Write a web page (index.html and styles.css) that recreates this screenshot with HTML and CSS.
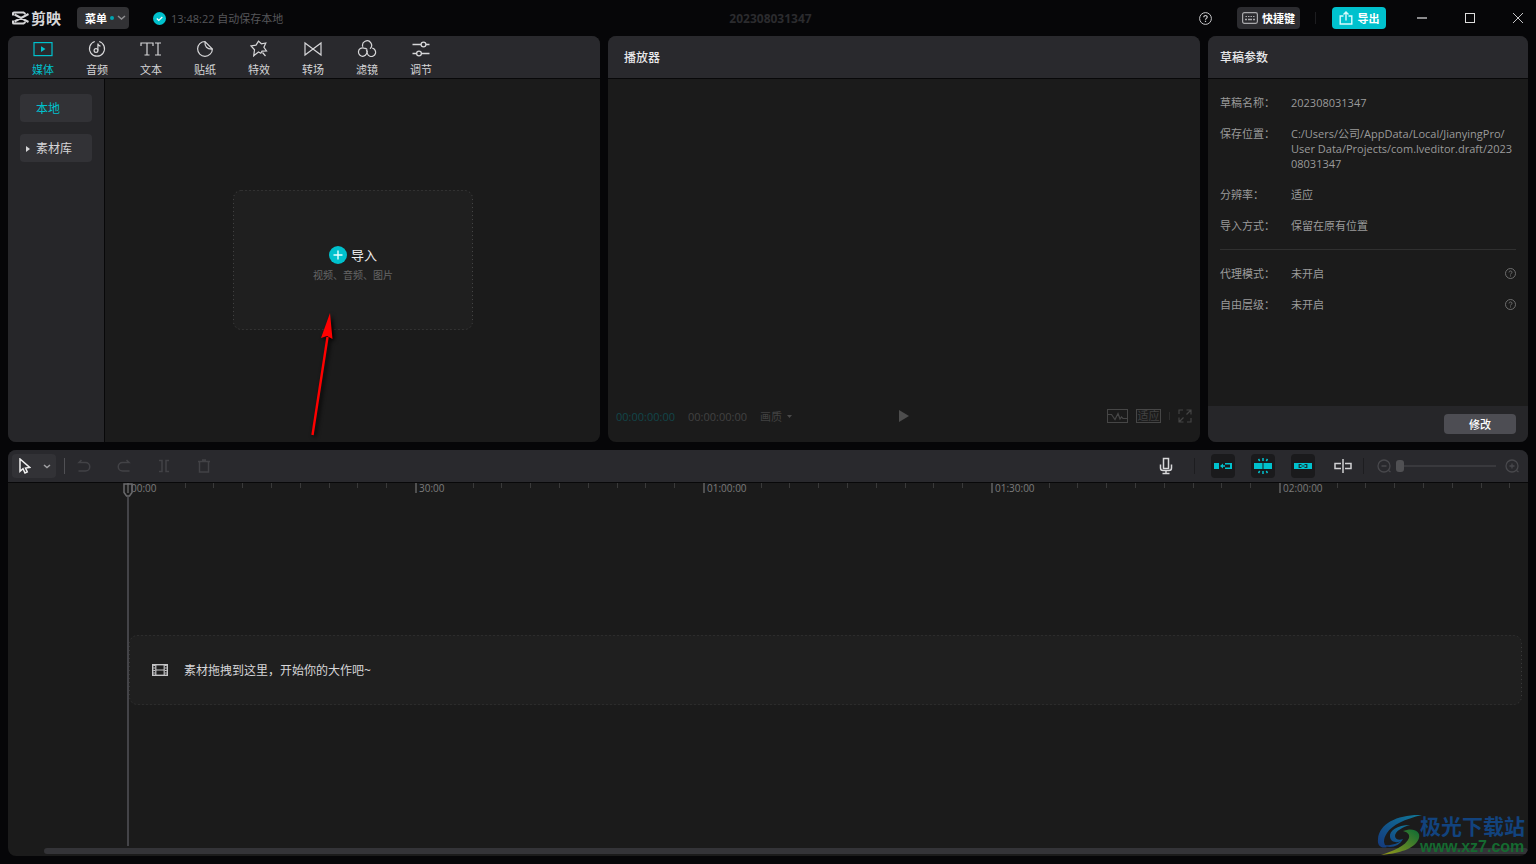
FILE: index.html
```html
<!DOCTYPE html>
<html lang="zh-CN">
<head>
<meta charset="utf-8">
<title>剪映</title>
<link rel="stylesheet" href="styles.css">
</head>
<body>
<div class="app">
  <header class="titlebar">
    <div class="titlebar-left">
      <div class="brand">
        <svg width="17" height="14" viewBox="0 0 17 14" fill="none" stroke="#d6d6d8" stroke-width="2"><path d="M16.500 3L2.500 10.500M16.500 11L2.500 3.500M1 4.500V2Q1 1.500 2 1.500H11.500L13.500 3M1 9.500V12Q1 12.500 2 12.500H11.500L13.500 11"/></svg>
        <span class="brand-name">剪映</span>
      </div>
      <button class="chip menu-button">菜单<i class="dot"></i><svg width="9" height="6" viewBox="0 0 9 6" fill="none" stroke="#8f8f92" stroke-width="1.500"><path d="M1 1l3.500 3L8 1"/></svg></button>
      <div class="autosave">
        <svg width="13" height="13" viewBox="0 0 13 13"><circle cx="6.500" cy="6.500" r="6.500" fill="#00c1cd"/><path d="M3.800 6.500l2 2 3.500-3.500" fill="none" stroke="#fff" stroke-width="1.200"/></svg>
        <span>13:48:22 自动保存本地</span>
      </div>
    </div>
    <h1 class="project-title">202308031347</h1>
    <div class="titlebar-right">
      <button class="icon-button help" aria-label="帮助"><svg width="13" height="13" viewBox="0 0 13 13" fill="none" stroke="#c8c8ca"><circle cx="6.500" cy="6.500" r="5.900"/><path d="M4.800 5.200c0-2.300 3.500-2.200 3.400 0 0 1.100-1.700 1.300-1.700 2.500M6.500 8.800v1.200" stroke-width="1.200"/></svg></button>
      <button class="chip shortcut-button"><svg width="16" height="12" viewBox="0 0 16 12" fill="none" stroke="#a9a9ac"><rect x=".6" y=".6" width="14.800" height="10.800" rx="1.800" stroke-width="1.200"/><path d="M3.500 4.500h9" stroke-dasharray="1.500 1"/><path d="M3 7.500h2M6 7.500h4M11 7.500h2" stroke-width="1.300"/></svg>快捷键</button>
      <i class="bar-separator"></i>
      <button class="chip export-button"><svg width="14" height="14" viewBox="0 0 14 14" fill="none" stroke="#d8fafc" stroke-width="1.400"><path d="M4.500 5H1.200v8h11.600V5H9.500M7 9.500V1.500M4.500 3.500L7 1l2.500 2.500"/></svg>导出</button>
      <div class="window-buttons">
        <button class="window-button" aria-label="最小化"><svg width="12" height="12"><path d="M1 6h10" stroke="#8a8a8c" stroke-width="2"/></svg></button>
        <button class="window-button" aria-label="最大化"><svg width="12" height="12"><rect x="1.500" y="1.500" width="9" height="9" fill="none" stroke="#dcdcdc"/></svg></button>
        <button class="window-button" aria-label="关闭"><svg width="12" height="12"><path d="M1 1l10 10M11 1L1 11" stroke="#c4c4c6"/></svg></button>
      </div>
    </div>
  </header>

  <main class="workspace">
    <section class="panel media-panel">
      <nav class="panel-head tabs">
        <button class="tab active"><svg width="20" height="18" viewBox="0 0 20 18"><rect x="1" y="2.600" width="18" height="13" fill="none" stroke="currentColor" stroke-width="1.200"/><path d="M8 6.200l4.500 2.900L8 12z" fill="currentColor"/></svg>媒体</button>
        <button class="tab"><svg width="20" height="18" viewBox="0 0 20 18" fill="none" stroke="currentColor" stroke-width="1.200"><path d="M7.800 1.500a7.500 7.500 0 1 0 4.400 0"/><circle cx="9" cy="10.500" r="1.900"/><path d="M10.900 10.500V3.500c0 1.600.8 2.300 2.600 2.600"/></svg>音频</button>
        <button class="tab"><svg width="22" height="18" viewBox="0 0 22 18" fill="none" stroke="currentColor" stroke-width="1.200"><path d="M1 6V3h12v3M7 3v12M4.500 15h5M15 3h6M18 3v12M15 15h6"/></svg>文本</button>
        <button class="tab"><svg width="20" height="18" viewBox="0 0 20 18" fill="none" stroke="currentColor" stroke-width="1.200"><path d="M10 1.500A7.400 7.400 0 1 0 17.400 9zM10 1.500c-.5 5 2 7.900 7.400 7.500"/></svg>贴纸</button>
        <button class="tab"><svg width="20" height="18" viewBox="0 0 20 18" fill="none" stroke="currentColor" stroke-width="1.200"><path d="M11.800 13.200L9.500 12l-4.800 3.800.8-6L2 6l5-.9 2.500-4 2.900 2.700 4.400-.8-1.900 4.300 2.600 3.600-4.500.2zM13.500 12.500l3 3.500"/></svg>特效</button>
        <button class="tab"><svg width="20" height="18" viewBox="0 0 20 18" fill="none" stroke="currentColor" stroke-width="1.200"><path d="M2 3v12l8-6 8 6V3l-8 6z"/></svg>转场</button>
        <button class="tab"><svg width="20" height="18" viewBox="0 0 20 18" fill="none" stroke="currentColor" stroke-width="1.200"><path d="M5.800 6.800a4.500 4.500 0 1 1 7.200 2M9.300 10a4.200 4.200 0 1 1-2.300-1.900c1.500.1 2.600.5 3.300 1.500M10.600 10.500a4.200 4.200 0 1 0 4.700-2.300"/></svg>滤镜</button>
        <button class="tab"><svg width="20" height="18" viewBox="0 0 20 18" fill="none" stroke="currentColor" stroke-width="1.300"><path d="M1.500 4.500h8.500M15 4.500h3.500M1.500 13.500h4M10.500 13.500h8"/><circle cx="12.500" cy="4.500" r="2.400"/><circle cx="8" cy="13.500" r="2.400"/></svg>调节</button>
      </nav>
      <div class="media-body">
        <aside class="media-sidebar">
          <button class="side-item active">本地</button>
          <button class="side-item"><svg class="side-caret" width="4" height="6"><path d="M0 0l4 3-4 3z" fill="#d6d6d8"/></svg>素材库</button>
        </aside>
        <div class="media-content">
          <button class="import-box">
            <svg class="dotted-frame" width="100%" height="100%"><rect x=".5" y=".5" rx="8"/></svg>
            <span class="import-title"><svg width="18" height="18"><circle cx="9" cy="9" r="9" fill="#00c1cd"/><path d="M4.500 9h9M9 4.500v9" stroke="#e8ffff" stroke-width="1.400"/></svg>导入</span>
            <span class="import-hint">视频、音频、图片</span>
          </button>
          <svg class="arrow" width="40" height="136" viewBox="0 0 40 136"><path d="M9.500 130L24.500 32" stroke="#f00" stroke-width="2.400"/><path d="M27 8L18 33l6-2 5.500 3z" fill="#f00"/></svg>
        </div>
      </div>
    </section>

    <section class="panel player-panel">
      <h2 class="panel-head panel-title player-title">播放器</h2>
      <div class="player-stage"></div>
      <div class="player-controls">
        <div class="player-times">
          <span class="time-current">00:00:00:00</span>
          <span>00:00:00:00</span>
          <button class="quality">画质<svg width="5" height="3"><path d="M0 0h5L2.500 3z" fill="#4a4a4a"/></svg></button>
        </div>
        <button class="icon-button" aria-label="播放"><svg width="12" height="14"><path d="M1 1l10 6-10 6z" fill="#4d4d4d"/></svg></button>
        <div class="player-tools">
          <button class="icon-button" aria-label="示波器"><svg width="21" height="14" fill="none" stroke="#464646"><rect x=".5" y=".5" width="20" height="13"/><path d="M1 5.500h3.500l3.500 5 3-6 2 5.500 1.500-2 1.500 1.500h5" stroke-width="1.200"/></svg></button>
          <button class="fit">适应</button>
          <i class="tool-separator"></i>
          <button class="icon-button" aria-label="全屏"><svg width="14" height="14" fill="none" stroke="#444" stroke-width="1.200"><path d="M1 5V1h4M9 13h4V9M8.500 1H13v4.500M13 1L8.500 5.500M1 8.500V13h4.500M1 13l4.500-4.500"/></svg></button>
        </div>
      </div>
    </section>

    <section class="panel params-panel">
      <h2 class="panel-head panel-title">草稿参数</h2>
      <dl class="params">
        <div class="param"><dt>草稿名称：</dt><dd>202308031347</dd></div>
        <div class="param"><dt>保存位置：</dt><dd>C:/Users/公司/AppData/Local/JianyingPro/<wbr>User Data/Projects/com.lveditor.draft/2023<wbr>08031347</dd></div>
        <div class="param"><dt>分辨率：</dt><dd>适应</dd></div>
        <div class="param"><dt>导入方式：</dt><dd>保留在原有位置</dd></div>
        <div class="param divided"><dt>代理模式：</dt><dd>未开启</dd><svg class="hint" width="11" height="11" viewBox="0 0 13 13" fill="none" stroke="#7d7d7d"><circle cx="6.500" cy="6.500" r="5.900"/><path d="M4.800 5.200c0-2.300 3.500-2.200 3.400 0 0 1.100-1.700 1.300-1.700 2.500M6.500 8.800v1.200"/></svg></div>
        <div class="param"><dt>自由层级：</dt><dd>未开启</dd><svg class="hint" width="11" height="11" viewBox="0 0 13 13" fill="none" stroke="#7d7d7d"><circle cx="6.500" cy="6.500" r="5.900"/><path d="M4.800 5.200c0-2.300 3.500-2.200 3.400 0 0 1.100-1.700 1.300-1.700 2.500M6.500 8.800v1.200"/></svg></div>
      </dl>
      <footer class="params-foot"><button class="modify">修改</button></footer>
    </section>
  </main>

  <section class="panel timeline">
    <div class="toolbar">
      <button class="pointer-tool" aria-label="选择"><svg width="12" height="16" viewBox="0 0 12 16" fill="none" stroke="#f0f0f0" stroke-width="1.500"><path d="M1 1v12.300l3-2.600 2 4.300 2.300-1.100L6.500 10l4.200-.6z"/></svg><svg width="8" height="5" fill="none" stroke="#a0a0a3" stroke-width="1.500"><path d="M1 1l3 2.500L7 1"/></svg></button>
      <i class="bar-separator light"></i>
      <div class="edit-tools">
        <button class="tool" aria-label="撤销"><svg width="14" height="14" fill="none" stroke="#424246" stroke-width="1.500"><path d="M4.500 1L2 3.500h6.500a4 4 0 0 1 0 8.500H1.500"/></svg></button>
        <button class="tool" aria-label="重做"><svg width="14" height="14" fill="none" stroke="#424246" stroke-width="1.500"><path d="M9.500 1L12 3.500H5.500a4 4 0 0 0 0 8.500h7"/></svg></button>
        <button class="tool" aria-label="分割"><svg width="14" height="14" fill="none" stroke="#424246" stroke-width="1.500"><path d="M2 1.500h3v11H2M12 1.500H9v11h3"/></svg></button>
        <button class="tool" aria-label="删除"><svg width="14" height="14" fill="none" stroke="#424246" stroke-width="1.500"><path d="M1 2.500h12M2.500 2.500v10.500h9V2.500M5 1h4"/></svg></button>
      </div>
      <div class="track-tools">
        <button class="tool" aria-label="录音"><svg width="14" height="18" fill="none" stroke="#d8d8da" stroke-width="1.500"><rect x="4.500" y="1.500" width="5" height="10"/><path d="M1.500 7.500v3.500q0 2.500 2.500 2.500h6q2.500 0 2.500-2.500V7.500M7 13.500V17M3.500 16.500h7"/></svg></button>
        <i class="bar-separator"></i>
        <button class="tool on" aria-label="主轨磁吸"><svg width="18" height="8" fill="#00c1cd"><path d="M0 1h5v6H0zM9 1.500v1.700h2v1.600H9v1.700L6 4zM11 1h7v6h-7V5.500h5v-3h-5z"/></svg></button>
        <button class="tool on" aria-label="自动吸附"><svg width="18" height="18" fill="#00c1cd"><path d="M0 6h8.500v6H0zM9.500 6H18v6H9.500z"/><path d="M9 1v3M4.500 2l1.200 2M13.500 2l-1.200 2M9 14v3M4.500 16l1.200-2M13.500 16l-1.200-2" stroke="#00c1cd" stroke-width="1.500"/></svg></button>
        <button class="tool on" aria-label="联动"><svg width="18" height="8"><path d="M0 1h18v6H0z" fill="#00c1cd"/><path d="M7.500 2.500H5.200v3h2.300M10.500 2.500h2.300v3h-2.300M7.500 4h3" fill="none" stroke="#1b2b2d" stroke-width="1.200"/></svg></button>
        <button class="tool" aria-label="预览轴"><svg width="18" height="14" fill="none" stroke="#d0d0d2" stroke-width="1.500"><path d="M7 4.500H1v5h6M11 4.500h6v5h-6M9 0v14"/></svg></button>
        <i class="bar-separator"></i>
        <div class="zoom-group">
          <button class="tool" aria-label="缩小"><svg width="15" height="14" fill="none" stroke="#48484c" stroke-width="1.300"><circle cx="7" cy="7" r="6"/><path d="M4.500 7h5M11.500 11.500l2 1.500"/></svg></button>
          <input class="zoom-slider" type="range" min="0" max="100" value="0" aria-label="时间线缩放">
          <button class="tool" aria-label="放大"><svg width="15" height="14" fill="none" stroke="#48484c" stroke-width="1.300"><circle cx="7" cy="7" r="6"/><path d="M4.500 7h5M7 4.500v5M11.500 11.500l2 1.500"/></svg></button>
        </div>
      </div>
    </div>
    <div class="timeline-body">
      <div class="ruler">
        <div class="segment"><span>00:00</span><i></i><i></i><i></i><i></i><i></i><i></i><i></i><i></i><i></i><i></i></div>
        <div class="segment"><span>30:00</span><i></i><i></i><i></i><i></i><i></i><i></i><i></i><i></i><i></i><i></i></div>
        <div class="segment"><span>01:00:00</span><i></i><i></i><i></i><i></i><i></i><i></i><i></i><i></i><i></i><i></i></div>
        <div class="segment"><span>01:30:00</span><i></i><i></i><i></i><i></i><i></i><i></i><i></i><i></i><i></i><i></i></div>
        <div class="segment"><span>02:00:00</span><i></i><i></i><i></i><i></i><i></i><i></i><i></i><i></i><i></i><i></i></div>
      </div>
      <div class="track-area">
        <div class="drop-track">
          <svg class="dotted-frame" width="100%" height="100%"><rect x=".5" y=".5" rx="8"/></svg>
          <svg width="16" height="12" fill="none" stroke="#c4c4c6"><rect x=".7" y=".7" width="14.600" height="10.600" stroke-width="1.400"/><path d="M3.800 1v10M12.200 1v10M4 6h8" stroke-width="1.200"/><path d="M2.200 1v10M13.800 1v10" stroke-dasharray="1 1.500" stroke-width="2"/></svg>
          <span>素材拖拽到这里，开始你的大作吧~</span>
        </div>
      </div>
      <div class="scroll-row"><div class="scroll-thumb"></div></div>
      <div class="playhead"><svg width="10" height="14" fill="none" stroke="#6a6a6c" stroke-width="1.500"><path d="M1 1h8v8.500l-2.500 3.500h-3L1 9.500z"/></svg></div>
    </div>
  </section>

  <div class="watermark">
    <svg width="46" height="42" viewBox="0 0 46 42">
      <defs>
        <linearGradient id="wm-blue" x1="1" y1="0" x2="0" y2="1"><stop offset="0" stop-color="#107a9a"/><stop offset="1" stop-color="#14387c"/></linearGradient>
        <linearGradient id="wm-green" x1="1" y1="0" x2="0" y2="1"><stop offset="0" stop-color="#0d6b35"/><stop offset="1" stop-color="#9a9a1a"/></linearGradient>
      </defs>
      <path d="M45 1C22 0 2 9 1 25c-1 7 4 10 9 8-4-3-4-8 0-14C15 11 28 5 45 1z" fill="url(#wm-blue)"/>
      <path d="M33 11c-13 0-21 6-20 12 1 6 9 7 13 2-4 2-8 0-8-3 0-5 8-9 15-11zM6 31c6 4 16 2 20-6-4 5-13 7-20 6z" fill="url(#wm-blue)"/>
      <path d="M26 17c10-4 18 0 16 7-3 9-15 15-38 17 12-4 25-9 28-17 1-4-2-6-6-7z" fill="url(#wm-green)"/>
    </svg>
    <div class="watermark-text"><span class="wm-name">极光下载站</span><span class="wm-url">www.xz7.com</span></div>
  </div>
</div>
</body>
</html>
```
FILE: styles.css
```css
* { box-sizing: border-box; }

body {
  margin: 0;
  background: #060608;
  color: #d6d6d8;
  font-family: "Open Sans", "Noto Sans CJK SC", sans-serif;
  font-size: 11px;
  line-height: 15px;
}

button {
  margin: 0;
  padding: 0;
  border: 0;
  background: none;
  color: inherit;
  font: inherit;
}

svg { display: block; flex: none; }
h1, h2, dl, dd { margin: 0; }

.app {
  position: relative;
  display: grid;
  grid-template-rows: 36px minmax(0, 406fr) minmax(0, 414fr);
  min-height: 100vh;
  padding-bottom: 8px;
}

/* Title bar */
.titlebar {
  display: grid;
  grid-template-columns: 1fr auto 1fr;
  align-items: center;
}
.titlebar-left, .titlebar-right, .brand, .autosave, .chip, .window-buttons {
  display: flex;
  align-items: center;
}
.titlebar-left { padding-left: 12px; }
.brand { gap: 2px; width: 65px; }
.brand-name { font-size: 15px; font-weight: 700; }
.chip {
  justify-content: center;
  height: 22px;
  border-radius: 4px;
  background: #2c2c30;
  color: #fff;
  font-weight: 700;
}
.menu-button { width: 52px; gap: 3px; padding-left: 5px; background: #323235; }
.dot { width: 4px; height: 4px; border-radius: 50%; background: #00a5b0; }
.autosave { gap: 5px; margin-left: 24px; color: #56565a; }
.project-title { padding-left: 5px; font-size: 12px; font-weight: 700; color: #2b2b2e; }
.titlebar-right { justify-content: flex-end; }
.icon-button { display: flex; align-items: center; justify-content: center; }
.help { margin-right: 25px; }
.shortcut-button { width: 63px; gap: 4px; }
.export-button { width: 54px; gap: 5px; background: #00c1cd; }
.bar-separator { width: 1px; height: 16px; background: #1d1d20; }
.titlebar-right .bar-separator { height: 12px; margin: 0 16px 0 15px; }
.window-buttons { gap: 12px; margin-left: 18px; }
.window-button {
  display: flex;
  align-items: center;
  justify-content: center;
  width: 36px;
  height: 36px;
}

/* Panels */
.workspace {
  display: grid;
  grid-template-columns: minmax(0, 1fr) minmax(0, 1fr) 320px;
  gap: 8px;
  padding: 0 8px;
}
.panel {
  display: flex;
  flex-direction: column;
  overflow: hidden;
  border-radius: 8px;
  background: #1b1b1b;
}
.panel-head {
  flex: none;
  height: 43px;
  border-bottom: 1px solid #080809;
  background: #29292d;
}
.panel-title {
  padding: 0 12px;
  color: #e8e8ea;
  font-size: 12px;
  font-weight: 500;
  line-height: 44px;
}
.player-title { padding: 0 16px; }

/* Media */
.tabs { display: flex; padding: 0 8px; }
.tab {
  display: flex;
  flex-direction: column;
  align-items: center;
  gap: 4px;
  width: 54px;
  padding-top: 4px;
}
.active { color: #00c1cd; }
.media-body { display: flex; flex: 1; }
.media-sidebar {
  display: flex;
  flex-direction: column;
  gap: 12px;
  width: 97px;
  padding: 15px 12px;
  border-right: 1px solid #080809;
  background: #262629;
}
.side-item {
  position: relative;
  height: 28px;
  padding-left: 16px;
  border-radius: 4px;
  background: #323236;
  font-size: 12px;
  text-align: left;
}
.side-caret { position: absolute; left: 6px; top: 12px; }
.media-content {
  position: relative;
  display: flex;
  flex: 1;
  align-items: center;
  justify-content: center;
  padding: 0 0 1px 1px;
}
.import-box {
  position: relative;
  display: flex;
  flex-direction: column;
  align-items: center;
  justify-content: center;
  width: 240px;
  height: 140px;
  padding-top: 10px;
  border-radius: 8px;
  background: #1f1f1f;
}
.dotted-frame {
  position: absolute;
  inset: 0;
  fill: none;
  stroke: #444;
  stroke-dasharray: 1 3;
}
.dotted-frame rect { width: calc(100% - 1px); height: calc(100% - 1px); }
.import-title {
  display: flex;
  align-items: center;
  gap: 4px;
  font-size: 13px;
  line-height: 20px;
  color: #ededed;
}
.import-hint { font-size: 10px; line-height: 20px; color: #666; }
.arrow {
  position: absolute;
  left: 198px;
  bottom: 1px;
  filter: drop-shadow(2px 2px 2px #000);
}

/* Player */
.player-stage { flex: 1; }
.player-controls {
  display: grid;
  grid-template-columns: 1fr auto 1fr;
  align-items: center;
  height: 52px;
  padding: 0 8px;
  color: #424242;
}
.player-times { display: flex; gap: 13px; }
.time-current { color: #12464a; }
.quality { display: flex; align-items: center; gap: 5px; }
.player-tools {
  display: flex;
  align-items: center;
  justify-content: flex-end;
  gap: 8px;
}
.fit { width: 25px; border: 1px solid #464646; line-height: 12px; }
.tool-separator { width: 1px; height: 8px; background: #2c2c2c; }

/* Draft parameters */
.params {
  display: flex;
  flex: 1;
  flex-direction: column;
  gap: 16px;
  padding: 16px 12px;
  color: #9a9a9a;
}
.param { display: flex; }
.param dt { flex: none; width: 71px; }
.param dd { flex: 1; min-width: 0; overflow-wrap: anywhere; }
.divided { padding-top: 16px; border-top: 1px solid #303030; }
.hint { align-self: center; }
.params-foot {
  display: flex;
  align-items: center;
  justify-content: flex-end;
  height: 36px;
  padding: 0 12px;
  background: #262629;
}
.modify {
  width: 72px;
  height: 20px;
  border-radius: 4px;
  background: #4d4d53;
  color: #fff;
  font-weight: 500;
}

/* Timeline */
.timeline { margin: 8px 8px 0; }
.toolbar {
  display: flex;
  flex: none;
  align-items: center;
  height: 33px;
  padding: 0 4px;
  border-bottom: 1px solid #080809;
  background: #29292d;
}
.pointer-tool {
  display: flex;
  align-items: center;
  justify-content: center;
  gap: 12px;
  width: 44px;
  height: 24px;
  margin-right: 8px;
  padding-left: 2px;
  border-radius: 4px;
  background: #323236;
}
.light { background: #505054; }
.edit-tools, .track-tools { display: flex; align-items: center; gap: 16px; }
.edit-tools { margin-left: 7px; }
.track-tools { margin-left: auto; }
.track-tools > .bar-separator:nth-last-child(2) { margin: 0 -8px; }
.tool {
  display: flex;
  align-items: center;
  justify-content: center;
  width: 24px;
  height: 24px;
  border-radius: 4px;
}
.on { background: #1a1a1c; }
.zoom-group { display: flex; align-items: center; }
.zoom-slider {
  width: 100px;
  height: 12px;
  margin: 0 4px 0 0;
  appearance: none;
  background: linear-gradient(#39393d, #39393d) center / 100% 2px no-repeat;
}
.zoom-slider::-webkit-slider-thumb {
  appearance: none;
  width: 8px;
  height: 12px;
  border-radius: 3px;
  background: #505053;
}

.timeline-body {
  position: relative;
  display: flex;
  flex: 1;
  flex-direction: column;
}
.ruler { display: flex; height: 14px; margin-left: 119px; }
.segment {
  position: relative;
  display: grid;
  grid-template-columns: repeat(10, 1fr);
  flex: none;
  width: 288px;
}
.segment span {
  position: absolute;
  left: 4px;
  top: -2px;
  font-size: 10px;
  line-height: 15px;
  color: #7b7b7b;
}
.segment i { height: 5px; border-left: 1px solid #3a3a3a; }
.segment i:first-of-type { height: 10px; border-left: 2px solid #505050; }
.segment i:nth-of-type(2) { border: 0; }
.track-area {
  display: flex;
  flex: 1;
  align-items: center;
  padding: 1px 6px 0 121px;
}
.drop-track {
  position: relative;
  display: flex;
  flex: 1;
  align-items: center;
  gap: 16px;
  height: 70px;
  padding-left: 23px;
  border-radius: 8px;
  background: #1f1f1f;
  font-size: 12px;
}
.drop-track .dotted-frame { stroke: #3a3a3a; }
.scroll-row { height: 14px; padding: 6px 0 0 36px; }
.scroll-thumb { height: 6px; border-radius: 3px; background: #343438; }
.playhead {
  position: absolute;
  left: 115px;
  top: 0;
  bottom: 10px;
  width: 10px;
  background: linear-gradient(#444448, #444448) 4px 14px / 2px 100% no-repeat;
}

/* Site mark */
.watermark {
  position: absolute;
  right: 11px;
  bottom: 8px;
  display: flex;
  align-items: flex-end;
}
.watermark-text { display: flex; flex-direction: column; margin-left: -3px; font-weight: 700; }
.wm-name { font-size: 21px; line-height: 24px; color: #12437e; }
.wm-url { font-family: "Liberation Sans", Arial, sans-serif; font-size: 16px; line-height: 18px; color: #156a30; }
```
